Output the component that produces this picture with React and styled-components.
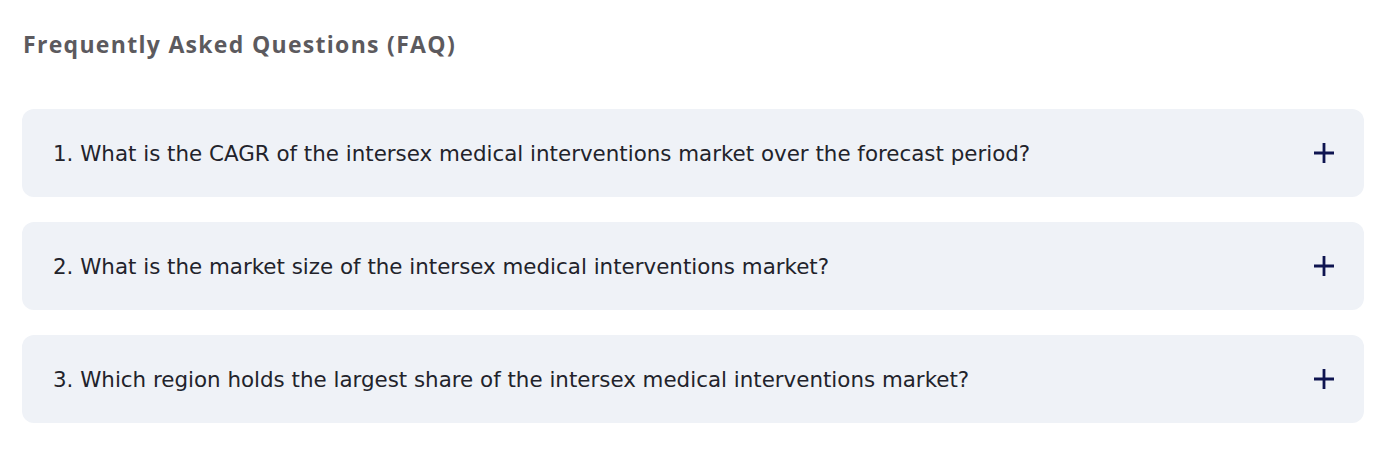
import React from 'react'
import styled, { createGlobalStyle } from "styled-components";

const Global = createGlobalStyle`
  body {
    margin: 0;
    background: #fff;
  }
`;

const Wrapper = styled.section`
  padding: 29px 31px 0 22px;
`;

const Title = styled.h2`
  margin: 0 0 50px 1px;
  font-family: "Open Sans", sans-serif;
  font-weight: 700;
  font-size: 23px;
  letter-spacing: 1.3px;
  line-height: 30px;
  color: #5c5a5e;
`;

const List = styled.div`
  display: flex;
  flex-direction: column;
  gap: 25px;
`;

const Item = styled.div`
  display: flex;
  align-items: center;
  justify-content: space-between;
  height: 88px;
  padding: 0 29px 0 31px;
  box-sizing: border-box;
  background: #eff2f7;
  border-radius: 12px;
`;

const Question = styled.span`
  font-family: "DejaVu Sans", sans-serif;
  font-size: 21.4px;
  color: #22232b;
`;

const Plus = styled.svg`
  width: 22px;
  height: 22px;
  flex-shrink: 0;
`;

const questions = [
  "1. What is the CAGR of the intersex medical interventions market over the forecast period?",
  "2. What is the market size of the intersex medical interventions market?",
  "3. Which region holds the largest share of the intersex medical interventions market?",
];

function App() {
  return (
    <Wrapper>
      <Global />
      <Title>Frequently Asked Questions (FAQ)</Title>
      <List>
        {questions.map((q) => (
          <Item key={q}>
            <Question>{q}</Question>
            <Plus viewBox="0 0 22 22">
              <path d="M11 1v20M1 11h20" stroke="#0e1450" strokeWidth="2.8" />
            </Plus>
          </Item>
        ))}
      </List>
    </Wrapper>
  )
}

export default App
